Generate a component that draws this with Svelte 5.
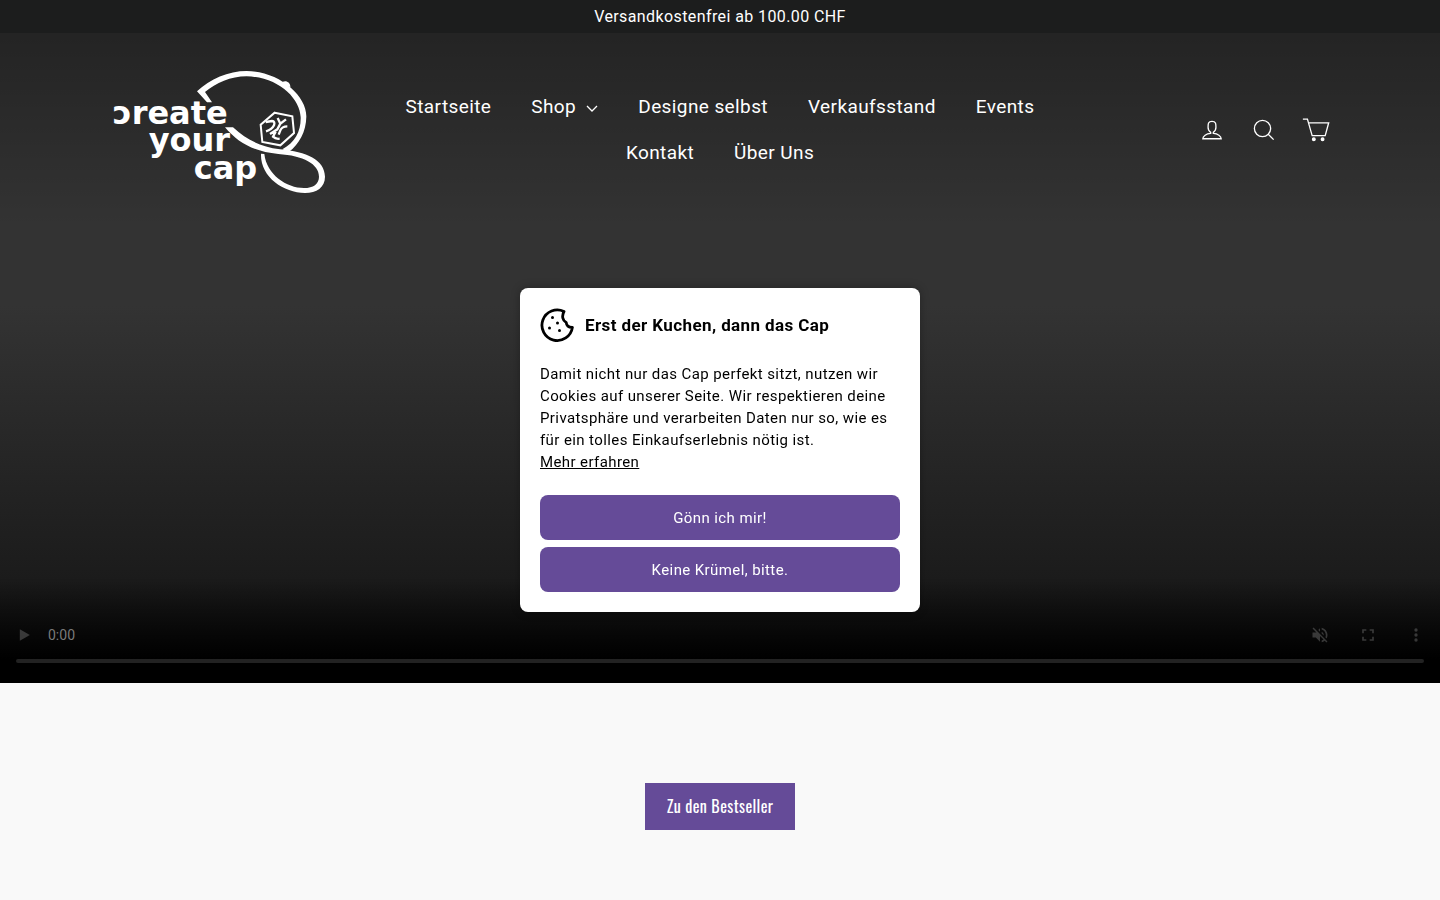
<script lang="ts">
	const links = [
		{ label: 'Startseite', href: '#start' },
		{ label: 'Shop', href: '#shop', dropdown: true },
		{ label: 'Designe selbst', href: '#design' },
		{ label: 'Verkaufsstand', href: '#verkauf' },
		{ label: 'Events', href: '#events' },
		{ label: 'Kontakt', href: '#kontakt' },
		{ label: 'Über Uns', href: '#ueber-uns' }
	];

	let showConsent = $state(true);
	let position = $state(0);

	function closeConsent() {
		showConsent = false;
	}
</script>

<div class="announcement">Versandkostenfrei ab 100.00 CHF</div>

<div class="hero">
	<header class="site-header">
		<a class="logo" href="#start" aria-label="Create your cap">
			<svg viewBox="0 0 720 420" width="240" height="140">
				<g fill="none" stroke="#fff">
					<path d="M336 127L321 127L291 94C330 57 385 33 440 33C535 33 620 105 619 170C618 215 598 252 566 276L547 268C586 246 603 213 602 172C600 115 535 51 440 49C392 49 348 69 315 96Z" fill="#fff" stroke="none" />
					<path d="M543 70C552 58 572 64 571 82Z" fill="#fff" stroke="none" />
					<path d="M375 202L399 202C440 240 480 259 540 268C620 275 674 300 675 350C675 382 650 399 615 399C550 399 480 350 483 281L493 282C500 344 560 384 612 384C640 384 657 372 657 350C657 312 610 287 535 282C460 275 414 248 375 202Z" fill="#fff" stroke="none" />
					<path d="M524 158L577 169L582 219L541 256L487 246L482 194Z" stroke-width="6" />
					<path d="M497 186L516 183Q526 184 522 196Q516 209 498 214M533 174L541 191L558 178M541 191L532 208L510 222M562 199Q546 199 541 211L536 224M527 215L519 230Q527 238 539 236" stroke-width="7" />
				</g>
				<text x="38" y="193">ɔreate</text>
				<text x="146" y="273">your</text>
				<text x="281" y="356">cap</text>
			</svg>
		</a>

		<nav aria-label="Hauptmenü">
			{#each links as link}
				<a href={link.href}>
					{link.label}
					{#if link.dropdown}
						<svg viewBox="0 0 12 8" width="12" height="8"><path d="M1 1l5 5 5-5" fill="none" stroke="currentColor" stroke-width="1.3" /></svg>
					{/if}
				</a>
			{/each}
		</nav>

		<div class="tools">
			<a href="#konto" aria-label="Einloggen">
				<svg viewBox="0 0 64 64" width="28" height="28"><path d="M35 39.84v-2.53c3.3-1.91 6-6.66 6-11.41 0-7.63 0-13.82-9-13.82s-9 6.19-9 13.82c0 4.75 2.7 9.51 6 11.41v2.53c-10.18.85-18 6-18 12.16h42c0-6.19-7.82-11.31-18-12.16z" /></svg>
			</a>
			<a href="#suche" aria-label="Suche">
				<svg viewBox="0 0 64 64" width="28" height="28"><path d="M47.16 28.58A18.58 18.58 0 1 1 28.58 10a18.58 18.58 0 0 1 18.58 18.58zM54 54L41.94 42" /></svg>
			</a>
			<a href="#warenkorb" aria-label="Einkaufswagen">
				<svg viewBox="0 0 64 64" width="28" height="28"><path d="M2 7h10.4l10.8 38H53l8-29.5H15" /><circle cx="27" cy="53" r="3" fill="#fff" /><circle cx="47" cy="53" r="3" fill="#fff" /></svg>
			</a>
		</div>
	</header>

	<div class="controls">
		<div class="control-row">
			<button type="button" aria-label="Abspielen" disabled>
				<svg viewBox="0 0 24 24" width="20" height="20"><path d="M7 5v14l12-7z" /></svg>
			</button>
			<span class="time">0:00</span>
			<button type="button" aria-label="Ton einschalten" disabled>
				<svg viewBox="0 0 24 24" width="20" height="20"><path d="M16.5 12A4.5 4.5 0 0 0 14 7.97v2.21l2.45 2.45c.03-.2.05-.41.05-.63zm2.5 0c0 .94-.2 1.82-.54 2.64l1.51 1.51A8.8 8.8 0 0 0 21 12c0-4.28-2.99-7.86-7-8.77v2.06c2.89.86 5 3.54 5 6.71zM4.27 3L3 4.27 7.73 9H3v6h4l5 5v-6.73l4.25 4.25c-.67.52-1.42.93-2.25 1.18v2.06a9 9 0 0 0 3.69-1.81L19.73 21 21 19.73l-9-9L4.27 3zM12 4L9.91 6.09 12 8.18V4z" /></svg>
			</button>
			<button type="button" aria-label="Vollbild" disabled>
				<svg viewBox="0 0 24 24" width="20" height="20"><path d="M5 14v5h5v-2H7v-3zM5 10h2V7h3V5H5zM17 17h-3v2h5v-5h-2zM14 5v2h3v3h2V5z" /></svg>
			</button>
			<button type="button" aria-label="Weitere Optionen" disabled>
				<svg viewBox="0 0 24 24" width="20" height="20"><circle cx="12" cy="6" r="2" /><circle cx="12" cy="12" r="2" /><circle cx="12" cy="18" r="2" /></svg>
			</button>
		</div>
		<input class="timeline" type="range" min="0" max="100" bind:value={position} aria-label="Position" disabled />
	</div>
</div>

<main>
	<a class="cta" href="#bestseller">Zu den Bestseller</a>
</main>

{#if showConsent}
	<div class="consent" role="dialog" aria-labelledby="consent-title">
		<div class="consent-head">
			<svg viewBox="0 0 34 34" width="34" height="34">
				<path d="M24 3.5A15.3 15.3 0 1 0 32.4 19.4C28.5 19.5 26.5 17.5 26.2 14.4C22.6 12.5 21.5 8 24 3.5Z" fill="none" stroke="#000" stroke-width="2.8" stroke-linejoin="round" />
				<circle cx="12.5" cy="9.5" r="1.5" />
				<circle cx="17.5" cy="15" r="1.5" />
				<circle cx="9.5" cy="20" r="1.5" />
				<circle cx="19.5" cy="22.5" r="1.5" />
			</svg>
			<h2 id="consent-title">Erst der Kuchen, dann das Cap</h2>
		</div>
		<p>
			Damit nicht nur das Cap perfekt sitzt, nutzen wir Cookies auf unserer Seite. Wir respektieren deine
			Privatsphäre und verarbeiten Daten nur so, wie es für ein tolles Einkaufserlebnis nötig ist.<br />
			<a href="#datenschutz">Mehr erfahren</a>
		</p>
		<div class="consent-actions">
			<button type="button" onclick={closeConsent}>Gönn ich mir!</button>
			<button type="button" onclick={closeConsent}>Keine Krümel, bitte.</button>
		</div>
	</div>
{/if}

<style>
	:global(body) {
		margin: 0;
		background: #f9f9f9;
		font-family: Roboto, sans-serif;
		letter-spacing: 0.025em;
		text-rendering: optimizeSpeed;
	}
	.announcement {
		padding: 6px 20px;
		background: #1c1d1d;
		color: #fff;
		font-size: 16px;
		line-height: 21px;
		text-align: center;
	}
	.hero {
		display: flex;
		flex-direction: column;
		justify-content: space-between;
		min-height: 650px;
		background:
			linear-gradient(to bottom, rgb(0 0 0 / 30%), transparent 194px),
			linear-gradient(to top, #000 24px, transparent 106px),
			linear-gradient(to bottom, #333 42%, #121212);
	}
	.site-header {
		display: grid;
		grid-template-columns: 240px 1fr 240px;
		align-items: center;
		gap: 20px;
		padding: 27px 100px;
	}
	.logo svg {
		display: block;
	}
	.logo text {
		fill: #fff;
		font-family: 'DejaVu Sans', sans-serif;
		font-size: 96px;
		font-weight: 700;
		letter-spacing: 0;
	}
	nav {
		display: flex;
		flex-wrap: wrap;
		justify-content: center;
	}
	nav a {
		padding: 0 20px;
		color: #fff;
		font-size: 19px;
		line-height: 46px;
		text-decoration: none;
	}
	nav a svg {
		margin-left: 5px;
	}
	.tools {
		display: flex;
		justify-content: flex-end;
		gap: 24px;
		padding-right: 10px;
	}
	.tools svg {
		display: block;
		fill: none;
		stroke: #fff;
		stroke-width: 3;
	}
	.controls {
		padding: 0 16px 20px;
	}
	.control-row {
		display: flex;
		align-items: center;
		height: 48px;
		margin: 0 -16px;
	}
	.control-row button {
		width: 48px;
		height: 48px;
		padding: 14px;
		border: 0;
		background: none;
		opacity: 0.2;
	}
	.control-row svg {
		display: block;
		fill: #fff;
	}
	.time {
		flex: 1;
		color: #7a7a7a;
		font-size: 14px;
		letter-spacing: 0;
	}
	.timeline {
		display: block;
		width: 100%;
		height: 4px;
		margin: 0;
		border-radius: 2px;
		background: #222;
		appearance: none;
	}
	.timeline::-webkit-slider-thumb {
		width: 0;
		appearance: none;
	}
	main {
		padding: 100px 20px;
		text-align: center;
	}
	.cta {
		display: inline-block;
		padding: 11px 22px;
		background: #654b98;
		color: #fff;
		font-family: Oswald, 'Roboto Condensed', 'Liberation Sans Narrow', sans-serif;
		font-size: 16px;
		line-height: 25px;
		text-decoration: none;
	}
	.consent {
		position: fixed;
		top: 50%;
		left: 50%;
		box-sizing: border-box;
		width: 400px;
		max-width: 100%;
		padding: 20px;
		border-radius: 8px;
		background: #fff;
		box-shadow: 0 0 10px rgb(0 0 0 / 30%);
		color: #000;
		transform: translate(-50%, -50%);
	}
	.consent-head {
		display: flex;
		align-items: center;
		gap: 11px;
	}
	h2 {
		margin: 0;
		font-size: 17px;
		font-weight: 700;
		line-height: 22px;
	}
	p {
		margin: 21px 0 22px;
		font-size: 15px;
		line-height: 22px;
	}
	p a {
		color: inherit;
	}
	.consent-actions {
		display: grid;
		gap: 7px;
	}
	.consent-actions button {
		height: 45px;
		border: 0;
		border-radius: 8px;
		background: #654b98;
		color: #fff;
		font: inherit;
		font-size: 15px;
		letter-spacing: inherit;
		text-rendering: inherit;
		cursor: pointer;
	}
</style>
